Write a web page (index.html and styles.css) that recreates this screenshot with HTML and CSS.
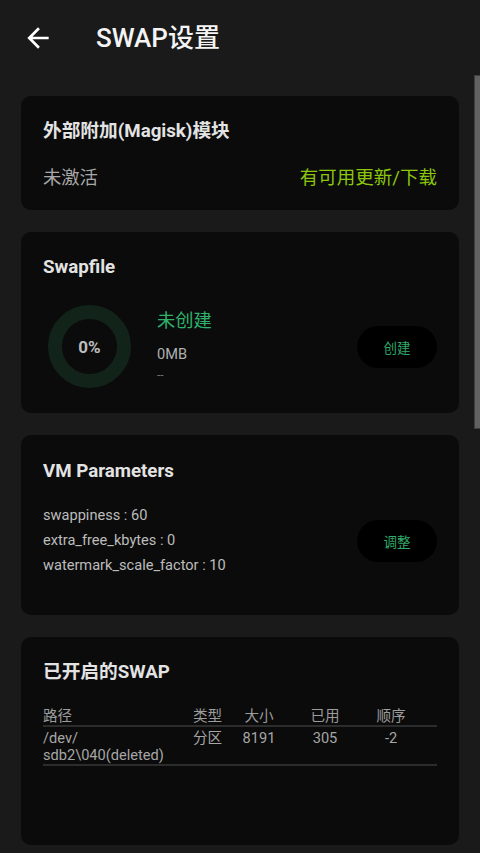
FILE: index.html
```html
<!DOCTYPE html>
<html lang="zh">
<head>
<meta charset="utf-8">
<title>SWAP设置</title>
<link rel="stylesheet" href="styles.css">
</head>
<body>
<header class="topbar">
  <svg class="back" viewBox="0 0 24 24" width="32" height="32"><path fill="#ffffff" d="M20 11H7.83l5.59-5.59L12 4l-8 8 8 8 1.41-1.41L7.83 13H20v-2z"/></svg>
  <h1 class="title">SWAP设置</h1>
</header>
<main class="content">
  <section class="card card-module">
    <h2 class="card-title">外部附加(Magisk)模块</h2>
    <div class="module-row">
      <span class="muted-lg">未激活</span>
      <span class="update">有可用更新/下载</span>
    </div>
  </section>

  <section class="card card-swapfile">
    <h2 class="card-title">Swapfile</h2>
    <div class="swap-body">
      <div class="donut"><span class="donut-label">0%</span></div>
      <div class="swap-info">
        <div class="state">未创建</div>
        <div class="size">0MB</div>
        <div class="dash">--</div>
      </div>
      <button class="pill">创建</button>
    </div>
  </section>

  <section class="card card-vm">
    <h2 class="card-title">VM Parameters</h2>
    <div class="vm-body">
      <ul class="params">
        <li>swappiness : 60</li>
        <li>extra_free_kbytes : 0</li>
        <li>watermark_scale_factor : 10</li>
      </ul>
      <button class="pill">调整</button>
    </div>
  </section>

  <section class="card card-list">
    <h2 class="card-title">已开启的SWAP</h2>
    <div class="swap-table">
      <div class="trow thead">
        <span class="c-path">路径</span>
        <span class="c-type">类型</span>
        <span class="c-num">大小</span>
        <span class="c-num">已用</span>
        <span class="c-num">顺序</span>
      </div>
      <div class="trow tbody">
        <span class="c-path">/dev/<br>sdb2\040(deleted)</span>
        <span class="c-type">分区</span>
        <span class="c-num">8191</span>
        <span class="c-num">305</span>
        <span class="c-num">-2</span>
      </div>
    </div>
  </section>
</main>
<div class="scrollbar"></div>
</body>
</html>
```

FILE: styles.css
```css
* { box-sizing: border-box; }
html, body {
  margin: 0;
  padding: 0;
  background: #1a1a1a;
  font-family: Roboto, "Noto Sans CJK SC", sans-serif;
  color: #e6e6e6;
}
body { min-height: 853px; overflow: hidden; }

.topbar {
  height: 76px;
  display: flex;
  align-items: center;
  padding-left: 22px;
}
.back { display: block; margin-top: -1px; }
.title {
  margin: 0 0 0 42px;
  font-size: 26px;
  font-weight: 500;
  color: #f4f4f4;
  line-height: 32px;
}

.content {
  padding: 20px 21px 0 21px;
  display: flex;
  flex-direction: column;
  gap: 22px;
}

.card {
  background: #0b0b0b;
  border-radius: 10px;
  padding: 23px 22px 20px 22px;
}
.card-title {
  margin: 0;
  font-size: 18.7px;
  line-height: 24px;
  font-weight: 700;
  color: #e3e3e3;
}

.module-row {
  margin-top: 23px;
  display: flex;
  justify-content: space-between;
  align-items: center;
  line-height: 24px;
}
.muted-lg { font-size: 18.3px; color: #a8a8a8; }
.update { font-size: 18.5px; color: #8cc70c; }

.card-swapfile { padding-bottom: 25px; }
.swap-body {
  margin-top: 26px;
  display: flex;
  align-items: center;
}
.donut {
  width: 83px;
  height: 83px;
  border-radius: 50%;
  border: 14px solid #12241a;
  display: flex;
  align-items: center;
  justify-content: center;
  margin-left: 5px;
  flex: none;
}
.donut-label { font-size: 17px; font-weight: 700; color: #bdbdbd; }
.swap-info { margin-left: 26px; flex: 1; padding-bottom: 2px; }
.state { font-size: 18.3px; line-height: 26px; color: #2fb26c; }
.size { margin-top: 10px; font-size: 14.6px; line-height: 20px; color: #b0b0b0; }
.dash { margin-top: 3px; font-size: 12px; line-height: 16px; color: #6e6e6e; }

.pill {
  width: 80px;
  height: 42px;
  border: none;
  border-radius: 21px;
  background: #000;
  color: #2fa868;
  font-family: inherit;
  font-size: 13.5px;
  flex: none;
  padding: 0;
}

.card-vm { padding-top: 24px; padding-bottom: 37px; }
.vm-body {
  margin-top: 20px;
  display: flex;
  align-items: center;
  justify-content: space-between;
}
.params {
  list-style: none;
  margin: 0;
  padding: 0;
  font-size: 14.6px;
  line-height: 25px;
  color: #bcbcbc;
}

.card-list { min-height: 208px; }
.swap-table { margin-top: 23px; }
.trow {
  display: grid;
  grid-template-columns: 150px 33px 66px 66px 66px 1fr;
  font-size: 14.6px;
  color: #a6a6a6;
}
.thead {
  line-height: 18px;
  border-bottom: 2px solid #2c2c2c;
  color: #9c9c9c;
}
.tbody {
  padding-top: 3px;
  line-height: 17px;
  border-bottom: 2px solid #2c2c2c;
  padding-bottom: 0;
}
.c-path, .c-type { text-align: left; }
.c-num { text-align: center; }
.c-type { white-space: nowrap; }

.scrollbar {
  position: fixed;
  right: 0;
  top: 75px;
  width: 6px;
  height: 354px;
  background: #626262;
  border: 1px solid #3e3e3e;
  border-right: none;
}
```
